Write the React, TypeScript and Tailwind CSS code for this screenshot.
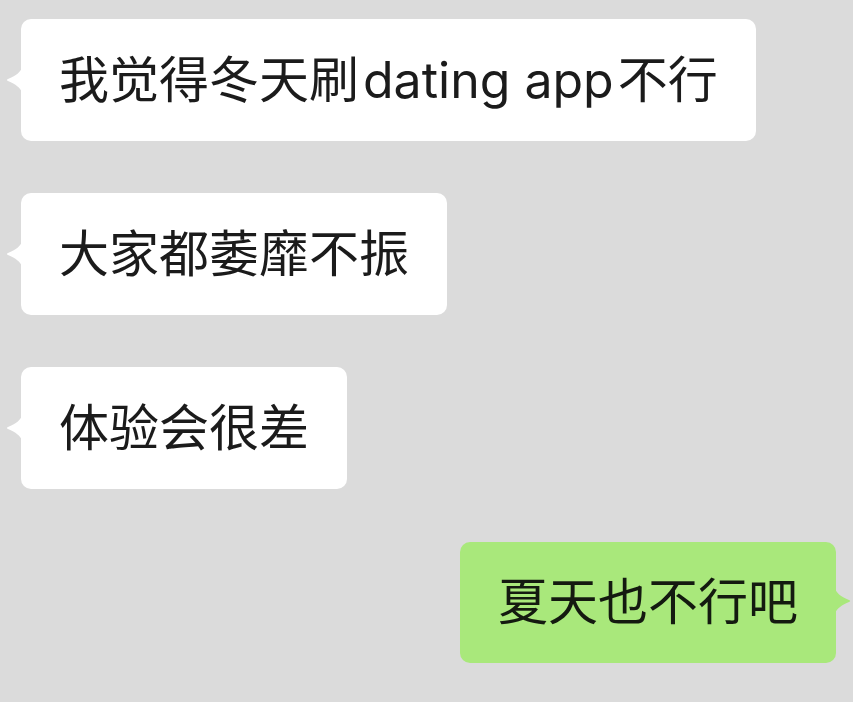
import React from "react";

const font = {
  fontFamily: '"Inter", "Noto Sans CJK SC", "Noto Sans", sans-serif',
};

function LeftBubble({ children }: { children: React.ReactNode }) {
  return (
    <div className="relative self-start">
      <svg
        className="absolute left-[-15px] top-[49px]"
        width="16"
        height="24"
        viewBox="0 0 16 24"
      >
        <path d="M16 0 C14 4 10 8 2 11 C0.5 11.7 0.5 12.3 2 13 C10 16 14 20 16 24 Z" fill="#ffffff" />
      </svg>
      <div
        className="h-[122px] flex items-center px-[38px] bg-white rounded-[10px] text-[50px] text-[#1b1b1b] whitespace-nowrap"
        style={font}
      >
        {children}
      </div>
    </div>
  );
}

function RightBubble({ children }: { children: React.ReactNode }) {
  return (
    <div className="relative self-end">
      <svg
        className="absolute right-[-15px] top-[47px]"
        width="16"
        height="24"
        viewBox="0 0 16 24"
      >
        <path d="M0 0 C2 4 6 8 14 11 C15.5 11.7 15.5 12.3 14 13 C6 16 2 20 0 24 Z" fill="#a9e87b" />
      </svg>
      <div
        className="h-[121px] flex items-center px-[38px] bg-[#a9e87b] rounded-[10px] text-[50px] text-[#141a10] whitespace-nowrap"
        style={font}
      >
        {children}
      </div>
    </div>
  );
}

export default function App() {
  return (
    <div className="w-[853px] h-[702px] bg-[#dbdbdb] overflow-hidden">
      <div className="flex flex-col gap-[52px] pt-[19px] pl-[21px] pr-[17px]">
        <LeftBubble>
          我觉得冬天刷<span className="mx-[4px]">dating app</span>不行
        </LeftBubble>
        <LeftBubble>大家都萎靡不振</LeftBubble>
        <LeftBubble>体验会很差</LeftBubble>
        <div className="mt-px flex flex-col">
          <RightBubble>夏天也不行吧</RightBubble>
        </div>
      </div>
    </div>
  );
}
